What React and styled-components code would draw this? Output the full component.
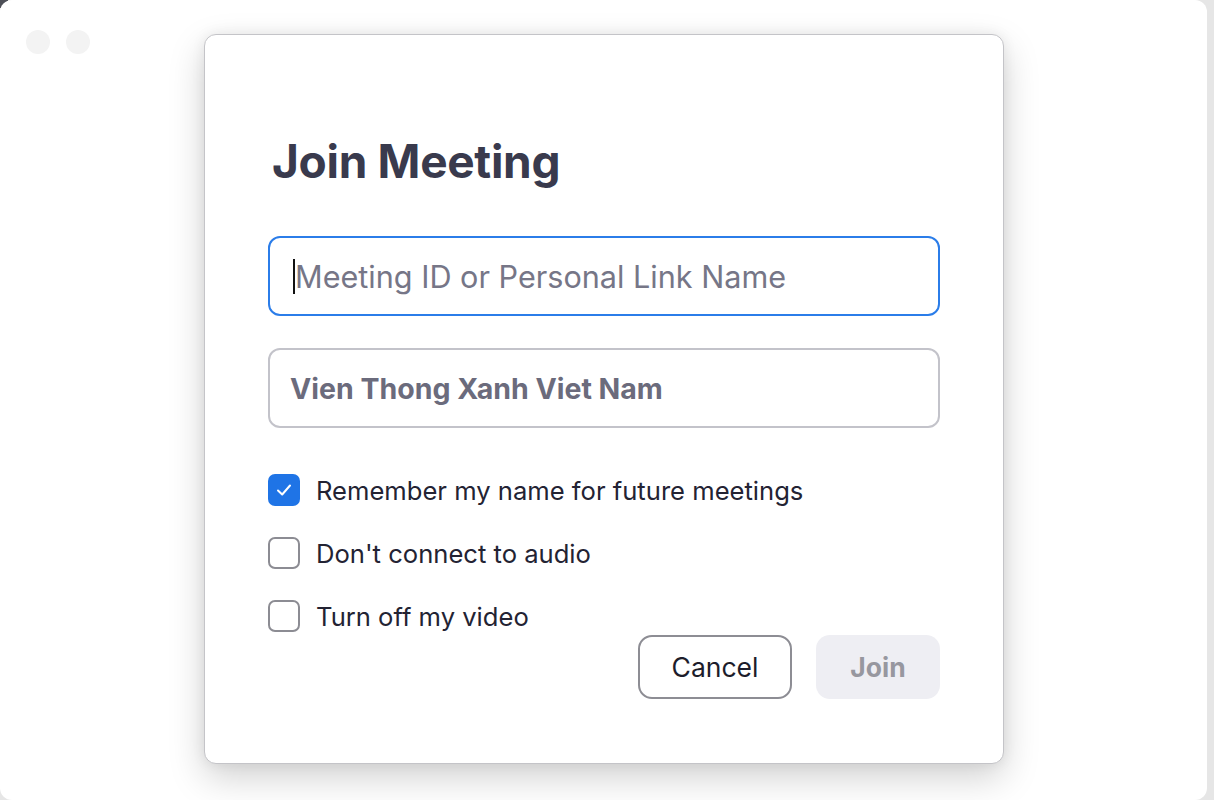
import React from "react";
import styled, { createGlobalStyle } from "styled-components";

const Global = createGlobalStyle`
  html, body { margin: 0; padding: 0; }
  body {
    width: 1214px;
    height: 800px;
    overflow: hidden;
    background: #e6e6e6;
    font-family: Inter, "Noto Sans", sans-serif;
    -webkit-font-smoothing: antialiased;
  }
`;

const Desk = styled.div`
  position: relative;
  width: 1214px;
  height: 800px;
  background: linear-gradient(135deg, #4d4f57 0 6px, #e6e6e6 6px);
  display: flex;
`;

const BackWindow = styled.div`
  width: 1207px;
  height: 800px;
  background: #ffffff;
  border-radius: 12px;
  box-sizing: border-box;
  padding: 34px 0 0 204px;
  position: relative;
`;

const Lights = styled.div`
  position: absolute;
  top: 30px;
  left: 26px;
  display: flex;
  gap: 16px;
`;

const Light = styled.span`
  width: 24px;
  height: 24px;
  border-radius: 50%;
  background: #f3f3f3;
`;

const Peek = styled.span`
  position: absolute;
  right: -6px;
  top: 744px;
  font-size: 28px;
  color: #1d1d1f;
  font-family: Inter, sans-serif;
  line-height: 1;
  clip-path: inset(0 0 0 7px);
  width: 13px;
  overflow: hidden;
`;

const Dialog = styled.div`
  width: 800px;
  height: 730px;
  box-sizing: border-box;
  background: #ffffff;
  border: 1px solid #c4c4c8;
  border-radius: 12px;
  box-shadow: 0 14px 36px rgba(0, 0, 0, 0.18), 0 0 14px rgba(0, 0, 0, 0.07);
  padding: 96px 63px 0 63px;
  display: flex;
  flex-direction: column;
`;

const Title = styled.h1`
  margin: 0 0 0 4px;
  font-size: 46px;
  line-height: 60px;
  font-weight: 700;
  letter-spacing: -0.3px;
  color: #393a4d;
`;

const Field = styled.div`
  height: 80px;
  box-sizing: border-box;
  border: 2px solid ${(p) => (p.$focus ? "#2b7de9" : "#c3c3ca")};
  border-radius: 12px;
  display: flex;
  align-items: center;
  padding-left: ${(p) => (p.$focus ? "23px" : "20px")};
  margin-top: ${(p) => p.$top}px;
  font-size: ${(p) => (p.$bold ? "28.5px" : "30.6px")};
  font-weight: ${(p) => (p.$bold ? 700 : 400)};
  color: ${(p) => (p.$bold ? "#6b6b7c" : "#767687")};
`;

const Caret = styled.span`
  width: 2px;
  height: 35px;
  background: #111;
`;

const Checks = styled.div`
  margin-top: 46px;
  display: flex;
  flex-direction: column;
  gap: 31px;
`;

const CheckRow = styled.div`
  display: flex;
  align-items: center;
  gap: 16px;
  height: 32px;
  font-size: 25.6px;
  color: #232333;
`;

const Box = styled.span`
  width: 32px;
  height: 32px;
  box-sizing: border-box;
  border-radius: 7px;
  border: ${(p) => (p.$checked ? "none" : "2px solid #8c8c93")};
  background: ${(p) => (p.$checked ? "#1f74e6" : "#fff")};
  display: flex;
  align-items: center;
  justify-content: center;
  flex-shrink: 0;
`;

const Actions = styled.div`
  display: flex;
  justify-content: flex-end;
  gap: 24px;
  margin-top: 3px;
`;

const Button = styled.button`
  height: 64px;
  box-sizing: border-box;
  border-radius: 14px;
  font-family: Inter, sans-serif;
  font-size: 26.5px;
  padding: 0;
  width: ${(p) => p.$w}px;
  border: ${(p) => (p.$primary ? "none" : "2px solid #8d8d94")};
  background: ${(p) => (p.$primary ? "#eeeef3" : "#fff")};
  color: ${(p) => (p.$primary ? "#97979f" : "#1d1d2b")};
  font-weight: ${(p) => (p.$primary ? 700 : 400)};
`;

const Check = () => (
  <svg width="20" height="20" viewBox="0 0 20 20" fill="none">
    <path d="M4 10.5 L8.2 14.5 L16 5.5" stroke="#fff" strokeWidth="2" strokeLinecap="round" strokeLinejoin="round" />
  </svg>
);

export default function App() {
  return (
    <>
      <Global />
      <Desk>
        <BackWindow>
          <Lights>
            <Light />
            <Light />
          </Lights>
          <Dialog>
            <Title>Join Meeting</Title>
            <Field $focus $top={45}>
              <Caret />
              Meeting ID or Personal Link Name
            </Field>
            <Field $bold $top={32}>Vien Thong Xanh Viet Nam</Field>
            <Checks>
              <CheckRow>
                <Box $checked><Check /></Box>
                Remember my name for future meetings
              </CheckRow>
              <CheckRow>
                <Box />
                Don't connect to audio
              </CheckRow>
              <CheckRow>
                <Box />
                Turn off my video
              </CheckRow>
            </Checks>
            <Actions>
              <Button $w={154}>Cancel</Button>
              <Button $primary $w={124}>Join</Button>
            </Actions>
          </Dialog>
        </BackWindow>
        <Peek>h</Peek>
      </Desk>
    </>
  );
}
